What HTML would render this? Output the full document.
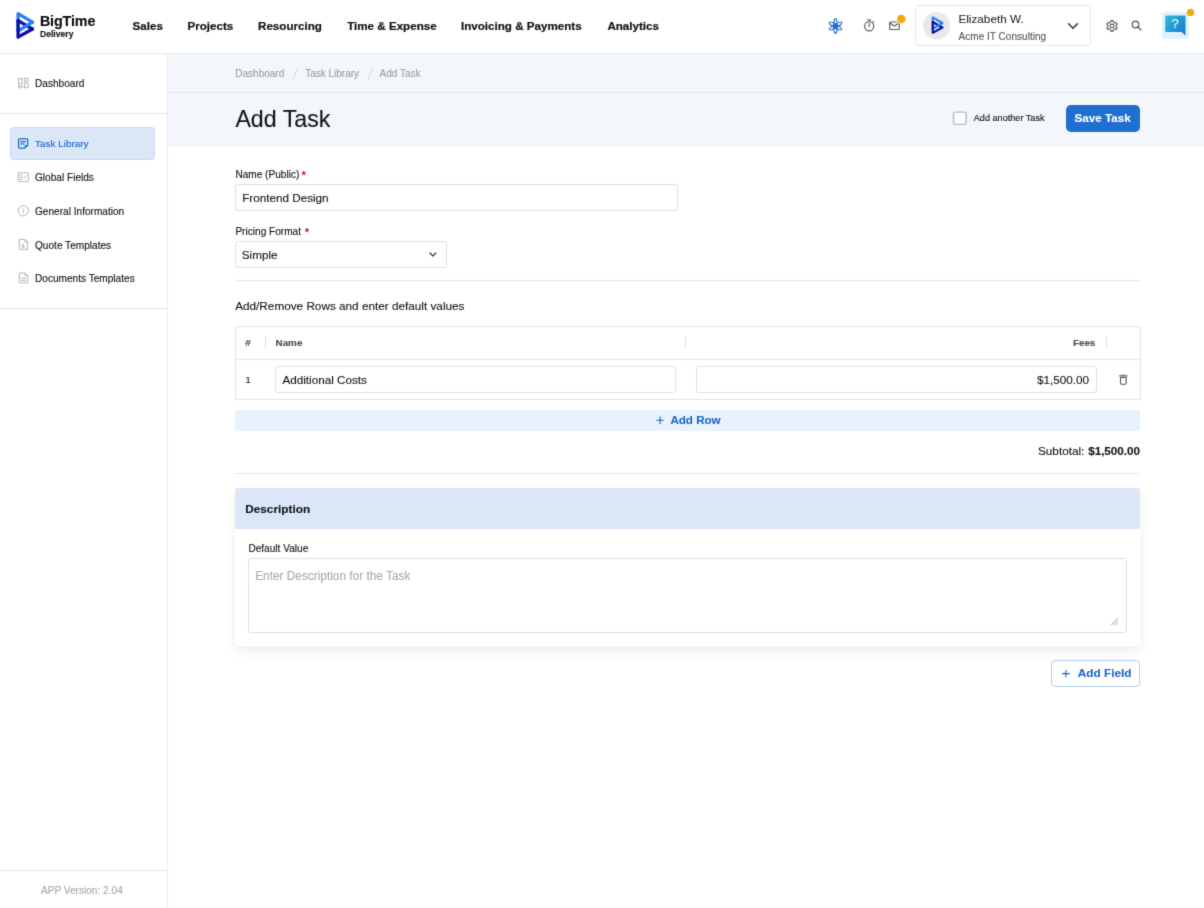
<!DOCTYPE html>
<html>
<head>
<meta charset="utf-8">
<style>
*{box-sizing:border-box;margin:0;padding:0}
html,body{width:1204px;height:908px;overflow:hidden;background:#fff;font-family:"Liberation Sans",sans-serif;color:#121417}
.abs{position:absolute}
.t{position:absolute;white-space:nowrap;line-height:1;-webkit-text-stroke:0.12px currentColor}
svg{position:absolute;overflow:visible}
#top{position:absolute;left:0;top:0;width:1204px;height:53px;background:#fff;z-index:5}
.nav{font-size:11.62px;font-weight:bold;color:#101214;top:20.4px;-webkit-text-stroke:0.2px #101214}
#side{position:absolute;left:0;top:54px;width:168px;height:874px;background:#fff;border-right:1px solid #ebecee}
.si{left:35px;font-size:10.1px;color:#121417}
.hr{position:absolute;height:1px;background:#e4e6e9}
#crumb{position:absolute;left:168px;top:54px;width:1056px;height:39px;background:#f3f6fb;border-bottom:1px solid #e3e7ed}
#title{position:absolute;left:168px;top:93px;width:1056px;height:54px;background:#f3f6fb}
.bc{top:15px;font-size:10px;color:#9b9fa4}
.lbl{font-size:10.1px;color:#121417}
.inp{position:absolute;border:1px solid #dfe1e4;border-radius:3px;background:#fff}
.it{font-size:11.7px;color:#121417}
</style>
</head>
<body><svg width="0" height="0" style="position:absolute"><filter id="soft" x="0" y="0" width="100%" height="100%" color-interpolation-filters="sRGB"><feConvolveMatrix order="3" kernelMatrix="0.0144 0.0912 0.0144 0.0912 0.5776 0.0912 0.0144 0.0912 0.0144" edgeMode="duplicate" preserveAlpha="true"/></filter></svg><div id="clip" style="position:absolute;left:0;top:0;width:1204px;height:908px;overflow:hidden"><div id="wrap" style="position:absolute;left:-20px;top:-20px;width:1244px;height:948px;background:#fff;will-change:transform;filter:url(#soft)"><div style="position:absolute;left:20px;top:20px;width:1204px;height:908px">
<!-- ============ TOP BAR ============ -->
<div class="abs" style="left:-20px;top:53px;width:1244px;height:1px;background:#e8eaee;z-index:6"></div>
<div id="top">
  <!-- logo -->
  <svg id="logo" style="left:14px;top:10px" width="24" height="32" viewBox="14 10 24 32">
    <g fill="none" stroke-width="3.25" stroke-linejoin="round" stroke-linecap="round">
      <path d="M18.05 31 L18.05 13.7 L32.5 22.2" stroke="#2a7ff5"/>
      <path d="M18.05 20.7 L32.5 29" stroke="#0a10a6"/>
      <path d="M32.5 22.2 L18.05 31" stroke="#2a7ff5"/>
      <path d="M18.05 20.7 L18.05 37.2 L32.5 29" stroke="#0a10a6"/>
    </g>
  </svg>
  <div class="t" id="bt" style="left:39.9px;top:14.3px;font-size:14.3px;font-weight:bold;color:#0b0b12;letter-spacing:-0.1px">BigTime</div>
  <div class="t" id="dl" style="left:40px;top:30.4px;font-size:8.6px;font-weight:bold;color:#15151c">Delivery</div>

  <div class="t nav" id="n1" style="left:132.6px">Sales</div>
  <div class="t nav" id="n2" style="left:187.4px">Projects</div>
  <div class="t nav" id="n3" style="left:258px">Resourcing</div>
  <div class="t nav" id="n4" style="left:347.2px">Time &amp; Expense</div>
  <div class="t nav" id="n5" style="left:461px">Invoicing &amp; Payments</div>
  <div class="t nav" id="n6" style="left:607.4px">Analytics</div>

  <!-- flower icon -->
  <svg style="left:827px;top:17px" width="17" height="18" viewBox="-8.5 -9 17 18">
    <g fill="none" stroke="#1f6fd0" stroke-width="1.2">
      <ellipse cx="0" cy="0" rx="1.75" ry="7.35"/>
      <ellipse cx="0" cy="0" rx="1.75" ry="7.1" transform="rotate(60)"/>
      <ellipse cx="0" cy="0" rx="1.75" ry="7.1" transform="rotate(120)"/>
    </g>
    <circle cx="0" cy="0" r="1.9" fill="#1f6fd0"/>
  </svg>
  <!-- timer icon -->
  <svg style="left:862px;top:18px" width="15" height="15" viewBox="862 18 15 15">
    <g fill="none" stroke="#5a5d61" stroke-width="1.2" stroke-linecap="round">
      <circle cx="869.2" cy="26.2" r="4.6"/>
      <path d="M867.8 19.8 H870.6 M869.2 23.6 V26.6 M872.9 22.3 L873.6 21.6"/>
    </g>
  </svg>
  <!-- mail icon -->
  <svg style="left:888px;top:20px" width="14" height="12" viewBox="888 20 14 12">
    <g fill="none" stroke="#5a5d61" stroke-width="1.2" stroke-linejoin="round" stroke-linecap="round">
      <path d="M896.5 22 H890.4 Q889.7 22 889.7 22.7 V28.8 Q889.7 29.5 890.4 29.5 H898.6 Q899.3 29.5 899.3 28.8 V24.2"/>
      <path d="M890 23.2 L894.5 26.1 L898.2 23.7"/>
    </g>
  </svg>
  <svg style="left:895px;top:13px" width="13" height="13" viewBox="895 13 13 13"><circle cx="901.3" cy="19" r="4.3" fill="#f5a90d"/></svg>

  <!-- user card -->
  <div class="abs" style="left:915px;top:5px;width:176px;height:41px;border:1px solid #e5e7ea;border-radius:3px;background:#fff"></div>
  <svg style="left:921px;top:10px" width="32" height="32" viewBox="921 10 32 32"><circle cx="936.6" cy="25.75" r="13.7" fill="#e9e9eb"/></svg>
  <svg style="left:929.5px;top:15.4px" width="16" height="21" viewBox="14 10 24 32">
    <g fill="none" stroke-width="3.3" stroke-linejoin="round" stroke-linecap="round">
      <path d="M18.05 31 L18.05 13.7 L32.5 22.2" stroke="#2a7ff5"/>
      <path d="M18.05 20.7 L32.5 29" stroke="#0a10a6"/>
      <path d="M32.5 22.2 L18.05 31" stroke="#2a7ff5"/>
      <path d="M18.05 20.7 L18.05 37.2 L32.5 29" stroke="#0a10a6"/>
    </g>
  </svg>
  <div class="t" id="u1" style="left:958.4px;top:13px;font-size:11.75px;color:#2b2e32">Elizabeth W.</div>
  <div class="t" id="u2" style="left:958.6px;top:31.6px;font-size:10.05px;color:#55595e">Acme IT Consulting</div>
  <svg style="left:1066px;top:21px" width="14" height="10" viewBox="1066 21 14 10">
    <path d="M1068.6 23.8 L1073 28.2 L1077.4 23.8" fill="none" stroke="#33363a" stroke-width="1.6" stroke-linecap="round" stroke-linejoin="round"/>
  </svg>

  <!-- gear -->
  <svg style="left:1104px;top:18px" width="16" height="16" viewBox="-8 -8 16 16">
    <g fill="none" stroke="#5c5f63" stroke-width="1.1" stroke-linejoin="round">
      <path d="M1.32 -3.83 L1.04 -5.35 L-1.04 -5.35 L-1.32 -3.83 L-2.66 -3.06 L-4.11 -3.58 L-5.15 -1.77 L-3.98 -0.77 L-3.98 0.77 L-5.15 1.77 L-4.11 3.58 L-2.66 3.06 L-1.32 3.83 L-1.04 5.35 L1.04 5.35 L1.32 3.83 L2.66 3.06 L4.11 3.58 L5.15 1.77 L3.98 0.77 L3.98 -0.77 L5.15 -1.77 L4.11 -3.58 L2.66 -3.06 Z"/>
      <circle cx="0" cy="0" r="1.9"/>
    </g>
  </svg>
  <!-- search -->
  <svg style="left:1129px;top:18px" width="15" height="15" viewBox="1129 18 15 15">
    <g fill="none" stroke="#55585c" stroke-width="1.2" stroke-linecap="round">
      <circle cx="1135.5" cy="24.5" r="3.3"/>
      <path d="M1138 27 L1141 30"/>
    </g>
  </svg>
  <!-- help -->
  <div class="abs" style="left:1162px;top:12px;width:26.6px;height:27.2px;border-radius:3px;background:#e0f2fc"></div>
  <svg style="left:1164px;top:14px" width="24" height="24" viewBox="1164 14 24 24">
    <defs><linearGradient id="hg" x1="0" y1="0" x2="1" y2="1"><stop offset="0" stop-color="#29c0d6"/><stop offset="1" stop-color="#1d6fd3"/></linearGradient></defs>
    <path d="M1166.3 15.6 H1184.4 Q1185.5 15.6 1185.5 16.7 V35.6 L1181.6 31.9 H1166.3 Q1165.2 31.9 1165.2 30.8 V16.7 Q1165.2 15.6 1166.3 15.6 Z" fill="url(#hg)"/>
  </svg>
  <div class="t" id="q" style="left:1171.6px;top:16.6px;font-size:13px;color:#f4fbff">?</div>
  <svg style="left:1185px;top:7px" width="12" height="12" viewBox="1185 7 12 12"><circle cx="1190.5" cy="12.45" r="3.65" fill="#f5a90d"/></svg>
</div>
<!-- ============ SIDEBAR ============ -->
<div id="side">
  <!-- coordinates inside #side are page-y minus 54 -->
  <svg style="left:17px;top:23px" width="13" height="12" viewBox="17 77 13 12">
    <g fill="none" stroke="#b3b6ba" stroke-width="1">
      <rect x="18.5" y="78.5" width="3.6" height="5"/>
      <rect x="24.4" y="78.5" width="3.6" height="2.6"/>
      <rect x="18.5" y="85.3" width="3.6" height="2.4"/>
      <rect x="24.4" y="83" width="3.6" height="4.7"/>
    </g>
  </svg>
  <div class="t si" id="s0" style="top:25px">Dashboard</div>
  <div class="hr" style="left:-20px;top:59px;width:187px"></div>

  <div class="abs" style="left:10px;top:72.6px;width:144.6px;height:33.4px;background:#dbe7f7;border:1px solid #c4d9f6;border-radius:3.5px"></div>
  <svg style="left:17px;top:83px" width="13" height="13" viewBox="17 137 13 13">
    <g fill="none" stroke="#1f6fd0" stroke-width="1.25" stroke-linejoin="round" stroke-linecap="round">
      <path d="M19.4 138.9 H26.9 Q27.7 138.9 27.7 139.7 V145.2 L24.8 148.1 H19.4 Q18.6 148.1 18.6 147.3 V139.7 Q18.6 138.9 19.4 138.9 Z"/>
      <path d="M20.8 141.6 H25.5 M20.8 143.9 H24"/>
    </g>
    <path d="M27.7 145 H25.4 Q24.7 145 24.7 145.7 V148.1 Z" fill="#1f6fd0"/>
  </svg>
  <div class="t si" id="s1" style="top:85px;font-size:9.95px;color:#1c68c9">Task Library</div>

  <svg style="left:17px;top:117px" width="13" height="12" viewBox="17 171 13 12">
    <g fill="none" stroke="#b3b6ba" stroke-width="1" stroke-linecap="round" stroke-linejoin="round">
      <rect x="18.2" y="172.8" width="10.2" height="8.8" rx="0.6"/>
      <path d="M19.8 175 H22 M19.8 177.2 H22 M19.8 179.4 H22 M23.6 177 L24.8 178.2 L26.9 175.8"/>
    </g>
  </svg>
  <div class="t si" id="s2" style="top:119.2px">Global Fields</div>

  <svg style="left:17px;top:151px" width="13" height="13" viewBox="17 205 13 13">
    <g fill="none" stroke="#b3b6ba" stroke-width="1">
      <circle cx="23.3" cy="210.8" r="5.1"/>
    </g>
    <rect x="22.8" y="209.9" width="1" height="3.6" fill="#b3b6ba"/>
    <rect x="22.8" y="207.9" width="1" height="1.1" fill="#b3b6ba"/>
  </svg>
  <div class="t si" id="s3" style="top:153.1px">General Information</div>

  <svg style="left:17px;top:184px" width="13" height="13" viewBox="17 238 13 13">
    <g fill="none" stroke="#b3b6ba" stroke-width="1" stroke-linejoin="round">
      <path d="M19.3 239.5 H25 L27.6 242.1 V249.3 H19.3 Z"/>
      <path d="M25 239.5 V242.1 H27.6"/>
    </g>
    <text x="21.5" y="248" font-size="5.5" font-family="Liberation Sans" font-weight="bold" fill="#b0b3b7">$</text>
  </svg>
  <div class="t si" id="s4" style="top:186.6px">Quote Templates</div>

  <svg style="left:17px;top:218px" width="13" height="13" viewBox="17 272 13 13">
    <g fill="none" stroke="#b3b6ba" stroke-width="1" stroke-linejoin="round">
      <path d="M19.3 273 H25 L27.6 275.6 V282.8 H19.3 Z"/>
      <path d="M25 273 V275.6 H27.6"/>
      <path d="M21 278.3 H25.9 M21 280.4 H25.9"/>
    </g>
  </svg>
  <div class="t si" id="s5" style="top:220.2px">Documents Templates</div>

  <div class="hr" style="left:-20px;top:254px;width:187px"></div>
  <div class="hr" style="left:-20px;top:816px;width:187px"></div>
  <div class="t" id="ver" style="left:41px;top:832px;font-size:10.1px;color:#a5a8ac">APP Version: 2.04</div>
</div>

<!-- ============ BREADCRUMB + TITLE ============ -->
<div id="crumb">
  <div class="t bc" id="b1" style="left:67.3px">Dashboard</div>
  <svg style="left:124px;top:11.8px" width="7" height="15" viewBox="0 0 7 15"><path d="M5.4 1.2 L1.4 13.2" stroke="#d3d6da" stroke-width="0.9" fill="none"/></svg>
  <div class="t bc" id="b2" style="left:137.2px">Task Library</div>
  <svg style="left:199px;top:11.8px" width="7" height="15" viewBox="0 0 7 15"><path d="M5.4 1.2 L1.4 13.2" stroke="#d3d6da" stroke-width="0.9" fill="none"/></svg>
  <div class="t bc" id="b3" style="left:211.6px">Add Task</div>
</div>
<div id="title">
  <div class="t" id="h1" style="left:67.4px;top:15px;font-size:23.2px;color:#121417">Add Task</div>
  <svg style="left:784px;top:17px" width="16" height="16" viewBox="0 0 16 16"><rect x="1.55" y="2.1" width="12.6" height="12.3" rx="1.8" fill="#fff" stroke="#b9bbbe" stroke-width="1.4"/></svg>
  <div class="t" id="aat" style="left:805.8px;top:21px;font-size:9.12px;color:#121417">Add another Task</div>
  <div class="abs" style="left:898px;top:11.7px;width:74.2px;height:27.3px;background:#1f6fd1;border-radius:5px"></div>
  <div class="t" id="sv" style="left:906.6px;top:19px;font-size:11.65px;font-weight:bold;color:#fff">Save Task</div>
</div>

<!-- ============ FORM ============ -->
<div class="t lbl" id="l1" style="left:235.4px;top:170.3px">Name (Public)</div>
<div class="t" style="left:301.8px;top:170.8px;font-size:10px;color:#d0151c;font-weight:bold">*</div>
<div class="inp" style="left:235px;top:183.6px;width:443px;height:27.4px"></div>
<div class="t it" id="i1" style="left:242.2px;top:192px">Frontend Design</div>

<div class="t lbl" id="l2" style="left:235.4px;top:227.3px">Pricing Format</div>
<div class="t" style="left:305px;top:227.8px;font-size:10px;color:#d0151c;font-weight:bold">*</div>
<div class="inp" style="left:235px;top:240.6px;width:211.8px;height:27.8px"></div>
<div class="t it" id="i2" style="left:241.8px;top:249px">Simple</div>
<svg style="left:428px;top:250px" width="10" height="9" viewBox="428 250 10 9"><path d="M430 253 L432.9 256 L435.8 253" fill="none" stroke="#3d4044" stroke-width="1.25" stroke-linecap="round" stroke-linejoin="round"/></svg>
<div class="hr" style="left:235px;top:280.4px;width:905px"></div>

<div class="t" id="arr" style="left:235.2px;top:299.7px;font-size:11.75px;color:#121417">Add/Remove Rows and enter default values</div>

<!-- table -->
<div class="abs" style="left:235px;top:325.6px;width:905.6px;height:74.6px;border:1px solid #e0e2e5;border-radius:2px"></div>
<div class="hr" style="left:236px;top:359.3px;width:904px;background:#e4e6e9"></div>
<div class="t" id="th0" style="left:245.2px;top:338.2px;font-size:9.8px;font-weight:bold;color:#4b4f54">#</div>
<div class="t" id="th1" style="left:275.5px;top:338.2px;font-size:9.9px;font-weight:bold;color:#4b4f54">Name</div>
<div class="t" id="th2" style="left:1073px;top:338.2px;font-size:9.75px;font-weight:bold;color:#4b4f54">Fees</div>
<div class="abs" style="left:265px;top:336px;width:1px;height:13.4px;background:#dfe1e4"></div>
<div class="abs" style="left:685.4px;top:336px;width:1px;height:13.4px;background:#dfe1e4"></div>
<div class="abs" style="left:1106px;top:336px;width:1px;height:13.4px;background:#dfe1e4"></div>
<div class="t" id="r1" style="left:245.6px;top:376.4px;font-size:9.3px;color:#121417">1</div>
<div class="inp" style="left:275px;top:366px;width:401.4px;height:27.4px"></div>
<div class="t it" id="i3" style="left:282.4px;top:374.4px">Additional Costs</div>
<div class="inp" style="left:695.6px;top:366px;width:401.4px;height:27.4px"></div>
<div class="t it" id="i4" style="left:1036.9px;top:374.4px">$1,500.00</div>
<svg style="left:1118px;top:373px" width="11" height="13" viewBox="1118 373 11 13">
  <g fill="none" stroke="#55585c" stroke-linejoin="round" stroke-linecap="round">
    <path d="M1120.5 377.5 H1126.2 V383.3 Q1126.2 384.2 1125.3 384.2 H1121.4 Q1120.5 384.2 1120.5 383.3 Z" stroke-width="1.1"/>
    <path d="M1119.6 375.9 H1127" stroke-width="1.2"/>
    <path d="M1122.4 374.8 H1124.4" stroke-width="0.8" stroke="#8a8c8f"/>
  </g>
</svg>

<!-- add row -->
<div class="abs" style="left:235px;top:410.2px;width:905.4px;height:20.5px;background:#e9f1fd;border-radius:3px"></div>
<svg style="left:655px;top:415px" width="10" height="10" viewBox="655 415 10 10"><path d="M656.4 420.2 H663.8 M660.1 416.5 V423.9" stroke="#1c68c9" stroke-width="1.15" fill="none"/></svg>
<div class="t" id="ar" style="left:670.4px;top:414.3px;font-size:11.6px;font-weight:bold;color:#1c68c9">Add Row</div>

<div class="t" id="st1" style="left:1038px;top:444.5px;font-size:11.75px;color:#121417">Subtotal:</div>
<div class="t" id="st2" style="left:1088.2px;top:444.5px;font-size:11.65px;font-weight:bold;color:#121417">$1,500.00</div>
<div class="hr" style="left:235px;top:473px;width:905px"></div>

<!-- description card -->
<div class="abs" style="left:235px;top:488.4px;width:905.4px;height:157.4px;background:#fff;border-radius:3px;box-shadow:0 5px 12px rgba(20,20,30,.075)"></div>
<div class="abs" style="left:235px;top:488.4px;width:905.4px;height:40.4px;background:#dbe7f7;border-radius:3px 3px 0 0"></div>
<div class="t" id="ds" style="left:245.2px;top:503.9px;font-size:11.8px;font-weight:bold;color:#121417">Description</div>
<div class="t lbl" id="dv" style="left:248.4px;top:544.4px">Default Value</div>
<div class="inp" style="left:248px;top:558.4px;width:879px;height:74.6px"></div>
<div class="t" id="ph" style="left:255.2px;top:571px;font-size:11.85px;color:#a9acb0">Enter Description for the Task</div>
<svg style="left:1108.3px;top:615.4px" width="12" height="12" viewBox="0 0 12 12"><path d="M3 10 L10 3 M5.2 10 L10 5.2 M7.5 10 L10 7.5" stroke="#8d9094" stroke-width="0.7" fill="none"/></svg>

<!-- add field -->
<div class="abs" style="left:1051px;top:660px;width:89.4px;height:27.2px;border:1px solid #b1cdf3;border-radius:4px;background:#fff"></div>
<svg style="left:1060px;top:668px" width="11" height="11" viewBox="1060 668 11 11"><path d="M1062 673.6 H1069.8 M1065.9 669.7 V677.5" stroke="#1c68c9" stroke-width="1.1" fill="none"/></svg>
<div class="t" id="af" style="left:1077.8px;top:668.4px;font-size:11.8px;font-weight:bold;color:#1c68c9">Add Field</div>
</div></div></div></body>
</html>
